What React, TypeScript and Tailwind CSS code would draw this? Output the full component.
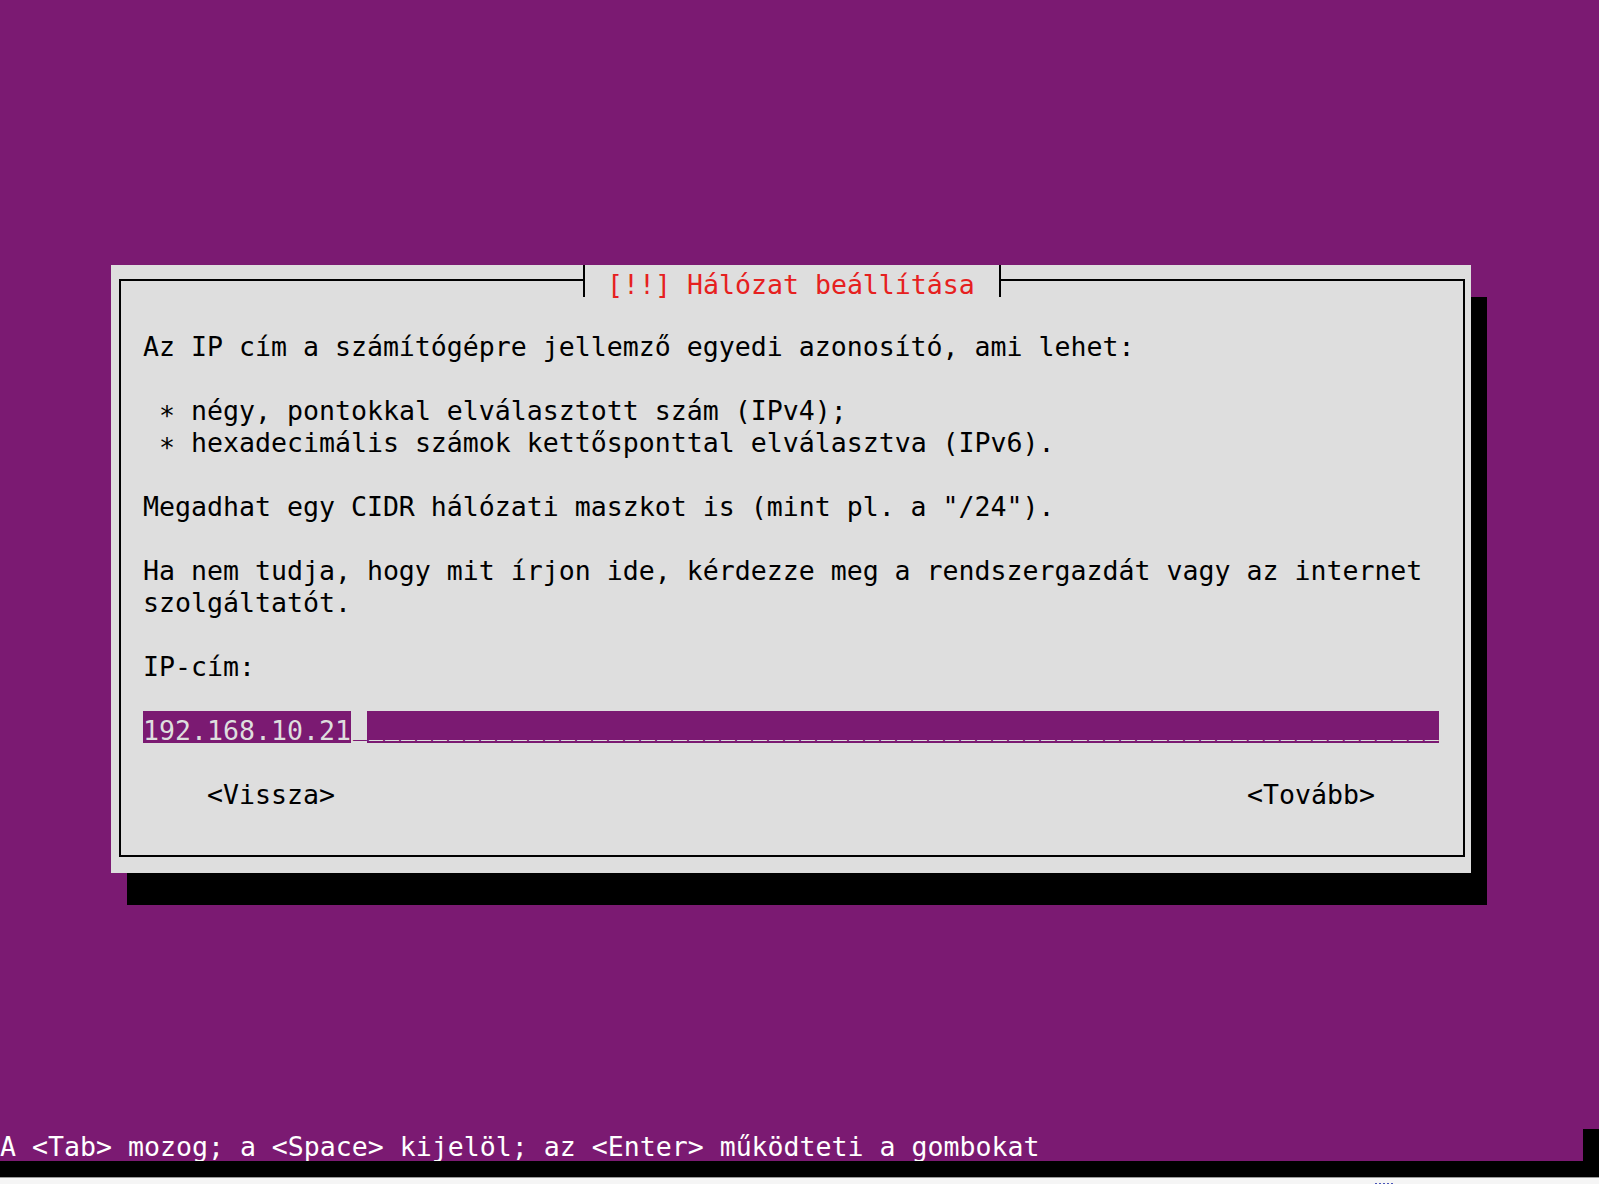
import React from "react";

const bodyLines: { text: string; bullet?: boolean }[] = [
  { text: "Az IP cím a számítógépre jellemző egyedi azonosító, ami lehet:" },
  { text: "" },
  { text: "négy, pontokkal elválasztott szám (IPv4);", bullet: true },
  { text: "hexadecimális számok kettősponttal elválasztva (IPv6).", bullet: true },
  { text: "" },
  { text: 'Megadhat egy CIDR hálózati maszkot is (mint pl. a "/24").' },
  { text: "" },
  { text: "Ha nem tudja, hogy mit írjon ide, kérdezze meg a rendszergazdát vagy az internet" },
  { text: "szolgáltatót." },
  { text: "" },
  { text: "IP-cím:" },
  { text: "" },
];

const Line = ({ children }: { children?: React.ReactNode }) => (
  <div className="h-[32px] whitespace-pre">{children}</div>
);

export default function App() {
  return (
    <div className="w-[1599px] h-[1184px] overflow-hidden bg-[#7b1a72] flex flex-col font-['DejaVu_Sans_Mono','Liberation_Mono',monospace] text-[26.576px] leading-[40px]">
      {/* dialog */}
      <div className="mt-[265px] ml-[111px] w-[1360px] h-[608px] bg-[#dedede] shadow-[16px_32px_0_0_#000] flex">
        <div className="relative flex-1 mt-[14px] ml-[8px] mr-[6px] mb-[16px] border-2 border-black">
          <div className="absolute top-[-16px] left-[462px] h-[32px] flex bg-[#dedede] border-x-2 border-black pl-[22px] pr-[24px] text-[#e62020] whitespace-pre">
            [!!] Hálózat beállítása
          </div>

          <div className="pt-[46px] pl-[22px] text-black">
            {bodyLines.map((l, i) => (
              <Line key={i}>
                {l.bullet ? (
                  <>
                    {" "}
                    <span className="inline-block translate-y-[5px]">*</span>
                    {" " + l.text}
                  </>
                ) : (
                  l.text
                )}
              </Line>
            ))}

            {/* input field */}
            <div className="h-[32px] flex whitespace-pre">
              <span className="w-[208px] bg-[#7b1a72] text-[#dedede]">192.168.10.21</span>
              <span className="w-[16px] pl-[2px] text-[#7b1a72] text-[23.254px] leading-[32px]">_</span>
              <span className="w-[1072px] pl-[2px] bg-[#7b1a72] text-[#dedede] text-[23.254px] leading-[32px] tracking-[2px]">
                {"_".repeat(66)}
                <span className="tracking-normal">_</span>
              </span>
            </div>

            <Line />

            <div className="h-[32px] flex whitespace-pre">
              <span className="ml-[64px]">&lt;Vissza&gt;</span>
              <span className="ml-[912px]">&lt;Tovább&gt;</span>
            </div>
          </div>
        </div>
      </div>

      {/* help line */}
      <div className="mt-[256px] h-[32px] flex leading-[36px]">
        <div className="w-[1583px] text-white whitespace-pre">
          A &lt;Tab&gt; mozog; a &lt;Space&gt; kijelöl; az &lt;Enter&gt; működteti a gombokat
        </div>
        <div className="flex-1 bg-black" />
      </div>
      <div className="h-[16px] bg-black" />
      <div className="h-[1px] bg-[#9a9a9a]" />
      <div className="flex-1 bg-[#f5f5f5] flex items-end pl-[1375px] gap-[2px]">
        <span className="w-[2px] h-[1px] bg-[#4a55b8]" />
        <span className="w-[2px] h-[1px] bg-[#4a55b8]" />
        <span className="w-[2px] h-[1px] bg-[#4a55b8]" />
        <span className="w-[2px] h-[1px] bg-[#4a55b8]" />
        <span className="w-[2px] h-[1px] bg-[#4a55b8]" />
      </div>
    </div>
  );
}
